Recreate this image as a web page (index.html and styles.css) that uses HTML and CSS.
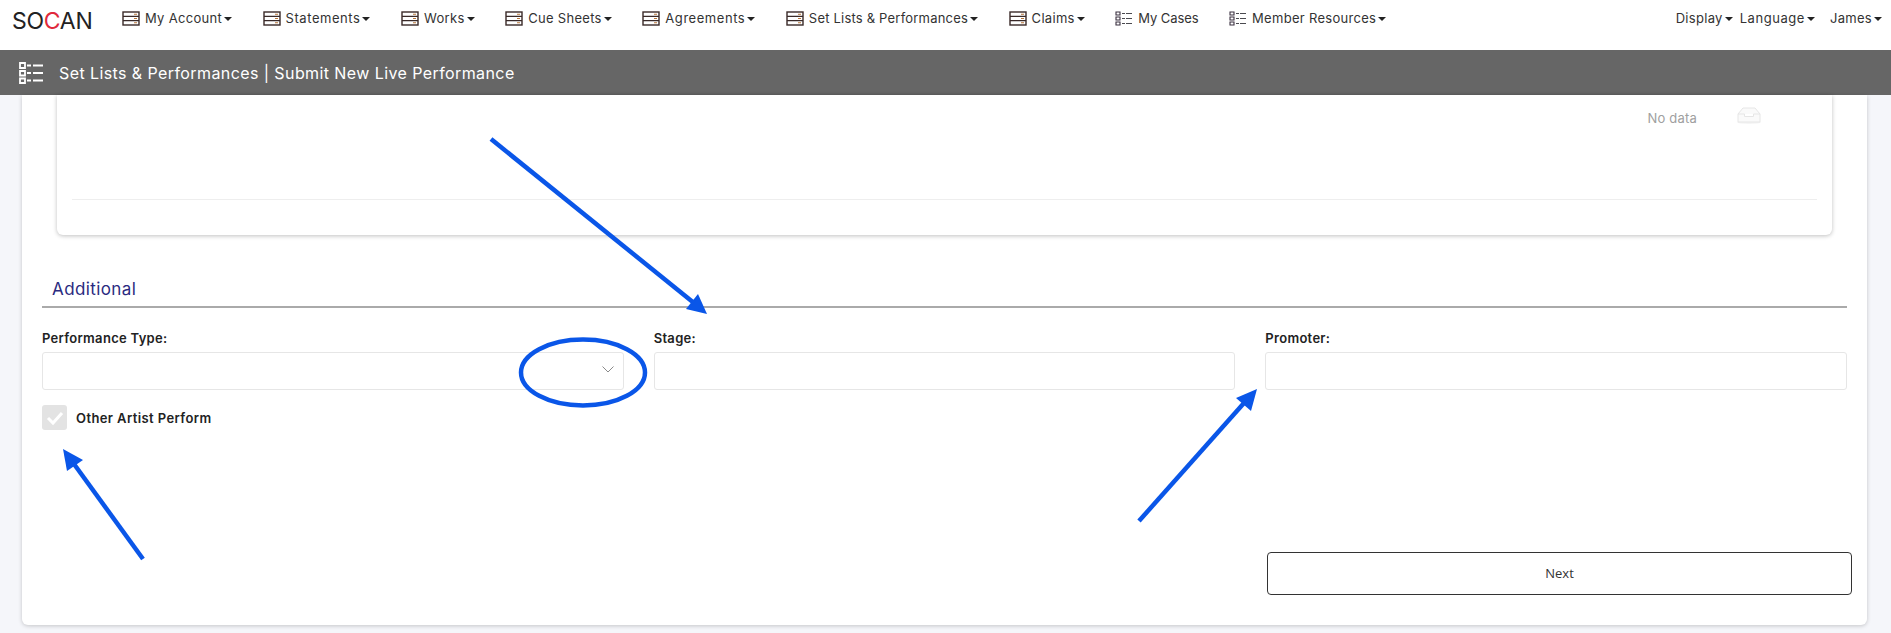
FILE: index.html
```html
<!DOCTYPE html>
<html lang="en">

<head>
    <meta charset="UTF-8">
    <meta name="viewport" content="width=device-width, initial-scale=1.0">
    <link rel="stylesheet" href="styles.css">
    <title>Submit New Live Performance</title>
</head>

<body>
    <svg class="icon-defs" width="0" height="0">
        <symbol id="icon-server" viewBox="0 0 18 15">
            <rect x="1" y="1" width="16" height="13" fill="none" stroke="#3a2a28" stroke-width="1.4" />
            <path d="M1 5.3h16M1 9.7h16" stroke="#3a2a28" stroke-width="1.2" />
            <path d="M12 3.2h3M12 7.5h3M12 11.8h3" stroke="#b8763a" stroke-width="1.1" />
        </symbol>
        <symbol id="icon-list" viewBox="0 0 18 15">
            <path d="M1 1h4v3H1zM1 6h4v3H1zM1 11h4v3H1z" fill="none" stroke="#3a3040" stroke-width="1.1" />
            <path d="M7 2.5h3M11 2.5h6M7 7.5h3M11 7.5h6M7 12.5h3M11 12.5h6" stroke="#4a4a50" stroke-width="1.1" />
        </symbol>
    </svg>

    <nav class="topnav">
        <span class="logo">SO<span class="logo-c">C</span>AN</span>
        <ul class="menu">
            <li><svg class="nav-icon"><use href="#icon-server" /></svg>My Account<i class="caret"></i></li>
            <li class="wide"><svg class="nav-icon"><use href="#icon-server" /></svg>Statements<i class="caret"></i></li>
            <li><svg class="nav-icon"><use href="#icon-server" /></svg>Works<i class="caret"></i></li>
            <li><svg class="nav-icon"><use href="#icon-server" /></svg>Cue Sheets<i class="caret"></i></li>
            <li class="wide"><svg class="nav-icon"><use href="#icon-server" /></svg>Agreements<i class="caret"></i></li>
            <li class="snug"><svg class="nav-icon"><use href="#icon-server" /></svg>Set Lists &amp; Performances<i class="caret"></i></li>
            <li><svg class="nav-icon"><use href="#icon-server" /></svg>Claims<i class="caret"></i></li>
            <li class="tight"><svg class="nav-icon"><use href="#icon-list" /></svg>My Cases</li>
            <li><svg class="nav-icon"><use href="#icon-list" /></svg>Member Resources<i class="caret"></i></li>
        </ul>
        <ul class="menu-right">
            <li>Display<i class="caret"></i></li>
            <li class="wide">Language<i class="caret"></i></li>
            <li class="user">James<i class="caret"></i></li>
        </ul>
    </nav>

    <header class="titlebar">
        <svg class="title-icon" viewBox="0 0 24 22">
            <path d="M1 1h5v5H1zM1 9h5v4.500H1zM1 16.500h5v4.500H1z" fill="none" stroke="#fff" stroke-width="1.800" />
            <path d="M8 3.500h4M14 3.500h10M8 11h4M14 11h10M8 18.500h4M14 18.500h10" stroke="#fff" stroke-width="1.800" />
        </svg>
        <h1>Set Lists &amp; Performances | Submit New Live Performance</h1>
    </header>

    <main class="main-card">
        <section class="inner-card">
            <div class="empty">
                <span class="empty-text">No data</span>
                <svg class="empty-icon" viewBox="0 0 24 17">
                    <ellipse cx="12" cy="15.500" rx="12" ry="1.500" fill="#f5f5f5" />
                    <path d="M6 1h12l5 6v8H1V7z" fill="#fafafa" stroke="#e6e6e6" />
                    <path d="M1 7h6.500v2.500h9V7H23" fill="#fff" stroke="#e6e6e6" />
                </svg>
            </div>
            <div class="inner-foot"></div>
        </section>

        <h2 class="section-title">Additional</h2>

        <form class="form-grid">
            <div class="field">
                <label for="perf-type">Performance Type:</label>
                <div class="select-box" id="perf-type">
                    <svg class="chevron" viewBox="0 0 12 7">
                        <path d="M0.500 0.500L6 6l5.500-5.500" fill="none" stroke="#8a8a8a" />
                    </svg>
                </div>
                <div class="check-row">
                    <span class="check-box">
                        <svg viewBox="0 0 25 25">
                            <path d="M6 13l5 5 9-10" fill="none" stroke="#fff" stroke-width="3" />
                        </svg>
                    </span>
                    <span class="check-label">Other Artist Perform</span>
                </div>
            </div>
            <div class="field">
                <label for="stage">Stage:</label>
                <input type="text" id="stage">
            </div>
            <div class="field">
                <label for="promoter">Promoter:</label>
                <input type="text" id="promoter">
            </div>
        </form>

        <button type="button" class="next-button">Next</button>
    </main>

    <!-- blue annotations drawn over the screenshot -->
    <svg class="annotations" viewBox="0 0 1891 633">
        <g fill="#0a56e8" stroke="none">
            <polygon points="707,314 698,294 686,309" />
            <polygon points="63,449 67,471 83,460" />
            <polygon points="1257,389 1236,398 1251,411" />
        </g>
        <g fill="none" stroke="#0a56e8" stroke-width="4.500">
            <path d="M491 139L694 303" />
            <path d="M143 559L74 464" />
            <path d="M1139 521L1244 403" />
            <ellipse cx="583" cy="372.500" rx="62" ry="33" />
        </g>
    </svg>
</body>

</html>
```

FILE: styles.css
```css
* {
    box-sizing: border-box;
}

body {
    margin: 0;
    height: 633px;
    overflow: hidden;
    position: relative;
    background-color: #f5f6fa;
    font-family: Inter, "Liberation Sans", sans-serif;
    color: #222;
}

.icon-defs {
    position: absolute;
}

ul {
    list-style: none;
    margin: 0;
    padding: 0;
}

/* top navigation */
.topnav {
    height: 50px;
    background-color: #fff;
    display: flex;
    align-items: center;
    padding: 0 9px 14px 12px;
    font-size: 13px;
    letter-spacing: 0.3px;
    color: #333;
}

.logo {
    width: 80px;
    margin-top: 6px;
    font-size: 23px;
    letter-spacing: -0.3px;
    white-space: nowrap;
    color: #222;
}

.logo-c {
    color: #e0293b;
}

.menu {
    display: flex;
    gap: 30.6px;
    margin-left: 30px;
}

.menu li,
.menu-right li {
    display: flex;
    align-items: center;
    white-space: nowrap;
}

/* Inter runs a little off the original font on some labels */
.menu .wide,
.menu-right .wide {
    letter-spacing: 0.55px;
}

.menu .snug {
    letter-spacing: 0.2px;
}

.menu .tight {
    letter-spacing: -0.1px;
}

.nav-icon {
    width: 18px;
    height: 15px;
    margin-right: 5px;
}

.caret {
    width: 0;
    height: 0;
    margin-left: 2px;
    margin-top: 2px;
    border-top: 4px solid #222;
    border-left: 4px solid transparent;
    border-right: 4px solid transparent;
}

.menu-right {
    display: flex;
    gap: 7px;
    margin-left: auto;
}

.menu-right .user {
    margin-left: 8px;
}

/* grey title bar */
.titlebar {
    height: 45px;
    background-color: #666;
    display: flex;
    align-items: center;
    padding-left: 19px;
    color: #fff;
}

.title-icon {
    width: 24px;
    height: 22px;
    margin-right: 16px;
}

.titlebar h1 {
    margin: 0;
    font-size: 16px;
    font-weight: 400;
    letter-spacing: 0.41px;
    white-space: nowrap;
}

/* page card */
.main-card {
    width: 1845px;
    height: 530px;
    margin-left: 22px;
    padding: 0 20px;
    background-color: #fff;
    border-radius: 0 0 6px 6px;
    box-shadow: 0 1px 4px rgba(0, 0, 0, 0.2);
    display: flex;
    flex-direction: column;
}

.inner-card {
    height: 140px;
    margin: 0 15px;
    padding: 0 15px;
    background-color: #fff;
    border-radius: 0 0 6px 6px;
    box-shadow: 0 1px 4px rgba(0, 0, 0, 0.25);
    flex-shrink: 0;
}

.empty {
    height: 105px;
    border-bottom: 1px solid #eee;
    display: flex;
    justify-content: flex-end;
    align-items: flex-start;
    padding: 12px 56px 0 0;
}

.empty-text {
    margin-top: 3px;
    margin-right: 40px;
    font-size: 13px;
    letter-spacing: 0.2px;
    color: #a0a0a0;
}

.empty-icon {
    width: 24px;
    height: 17px;
}

.section-title {
    margin: 44px 0 0;
    padding: 0 0 7px 10px;
    font-size: 17px;
    line-height: 20px;
    font-weight: 400;
    letter-spacing: 0.4px;
    color: #2a2a80;
    border-bottom: 2px solid #aaa;
}

.form-grid {
    display: grid;
    grid-template-columns: repeat(3, 1fr);
    gap: 30px;
    margin-top: 22px;
}

.field label {
    display: block;
    height: 16px;
    margin-bottom: 6px;
    font-size: 13px;
    line-height: 16px;
    font-weight: 600;
    letter-spacing: 0.3px;
}

.field input,
.select-box {
    display: block;
    width: 100%;
    height: 38px;
    background-color: #fff;
    border: 1px solid #e6e6e6;
    border-radius: 3px;
}

.select-box {
    display: flex;
    align-items: center;
    justify-content: flex-end;
    padding-right: 9px;
}

.chevron {
    width: 12px;
    height: 7px;
    margin-bottom: 4px;
}

.check-row {
    display: flex;
    align-items: center;
    margin-top: 15px;
}

.check-box {
    width: 25px;
    height: 25px;
    margin-right: 9px;
    background-color: #e3e3e3;
    border-radius: 3px;
}

.check-box svg {
    display: block;
}

.check-label {
    font-size: 13px;
    font-weight: 600;
    letter-spacing: 0.4px;
}

.next-button {
    width: 585px;
    height: 43px;
    margin-top: 122px;
    margin-right: -5px;
    padding-bottom: 3px;
    align-self: flex-end;
    background-color: #fff;
    border: 1px solid #333;
    border-radius: 4px;
    font-family: "Open Sans", sans-serif;
    font-size: 13px;
    color: #333;
}

/* overlay with the arrows and the circle */
.annotations {
    position: absolute;
    top: 0;
    left: 0;
    width: 1891px;
    height: 633px;
    pointer-events: none;
}
```
